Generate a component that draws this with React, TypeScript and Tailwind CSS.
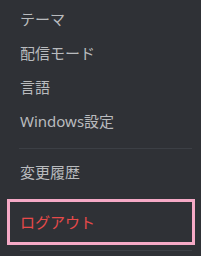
export default function App() {
  const items = ["テーマ", "配信モード", "言語", "Windows設定"]

  return (
    <div
      className="h-screen w-full bg-[#2f3136] pt-[2px] text-[15px] text-[#b9bbbe]"
      style={{ fontFamily: '"Noto Sans", "Noto Sans CJK JP", sans-serif' }}
    >
      {items.map((item) => (
        <div key={item} className="flex h-[34px] items-center pl-5">
          {item}
        </div>
      ))}
      <div className="ml-[19px] mr-[9px] mt-[10px] h-px bg-[#3c3f45]" />
      <div className="mt-[6px] flex h-[34px] items-center pl-5">変更履歴</div>
      <div className="ml-[7px] mr-[6px] mt-[10px] flex h-[46px] items-center border-[3px] border-[#f5a9c6] pl-[10px] text-[#e84a4a]">
        ログアウト
      </div>
      <div className="ml-5 mr-[9px] mt-[5px] h-px bg-[#3c3f45]" />
    </div>
  )
}
